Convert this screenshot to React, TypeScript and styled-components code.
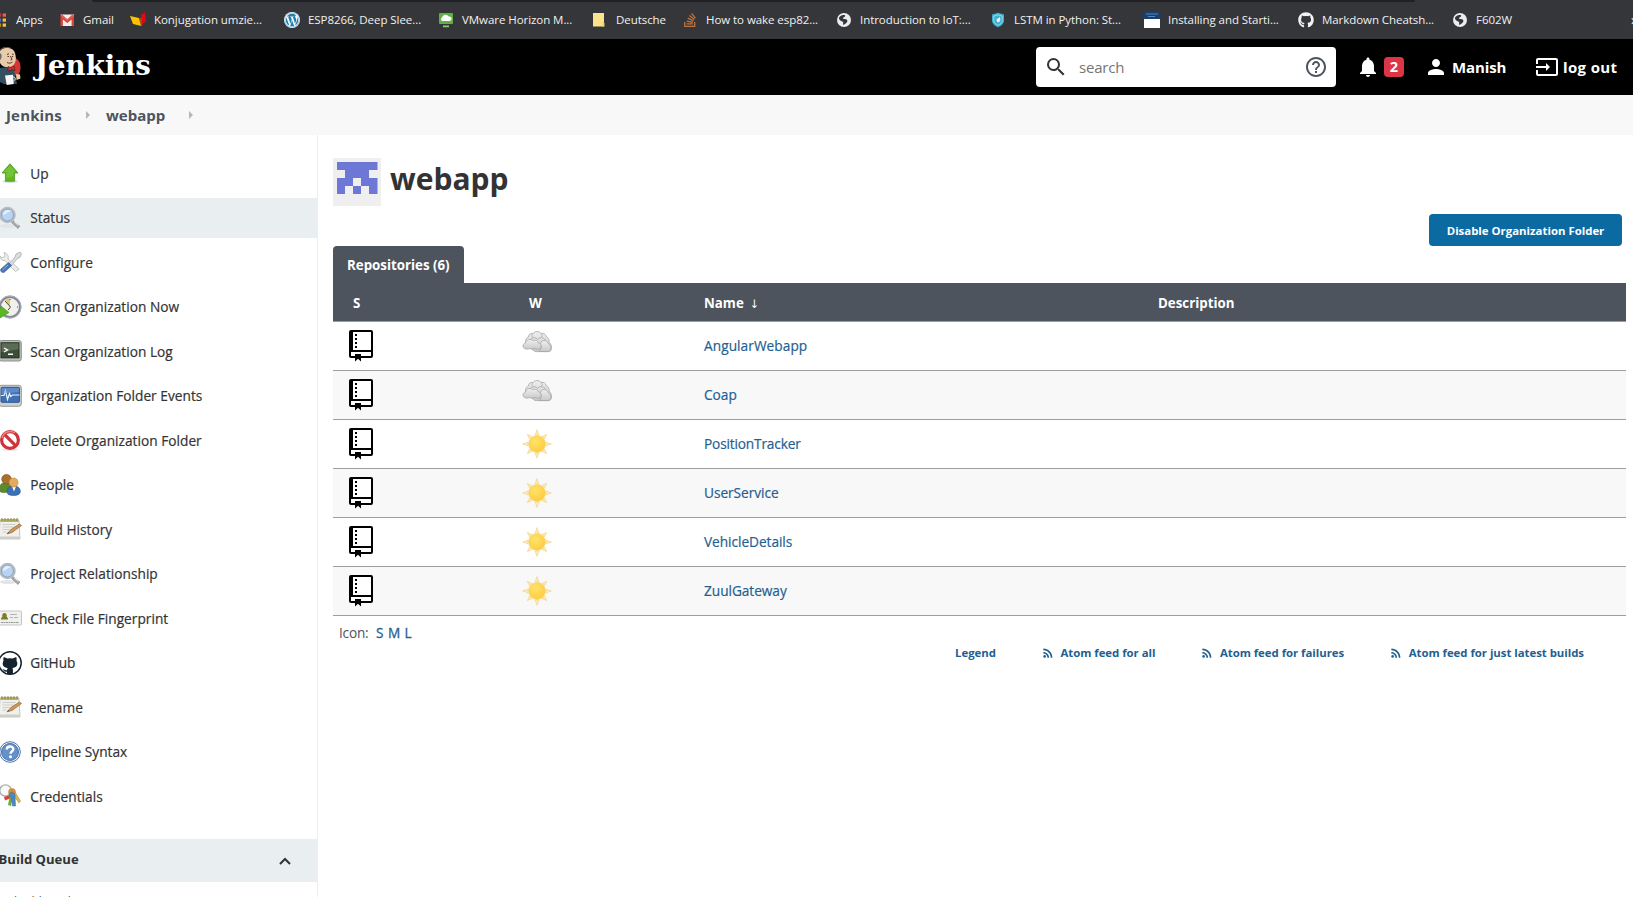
import React from 'react';
import styled, { createGlobalStyle, css } from 'styled-components';
import { FaWordpress, FaStackOverflow, FaGithub } from 'react-icons/fa';
import { MdSearch, MdHelpOutline, MdNotifications, MdPerson, MdInput, MdRssFeed } from 'react-icons/md';

const Global = createGlobalStyle`
  * { box-sizing: border-box; }
  body {
    margin: 0;
    background: #fff;
    color: #333;
    font-family: 'Open Sans', 'Noto Sans', sans-serif;
    overflow: hidden;
  }
  a { color: #1f5f92; text-decoration: none; }
`;

const Page = styled.div`
  display: flex;
  flex-direction: column;
  height: 897px;
  overflow: hidden;
`;

/* ---------- browser bookmarks ---------- */

const TabStrip = styled.div`
  flex: none;
  height: 2px;
  background: #35363a;
  padding: 0 218px 0 92px;
`;
const TabStripFill = styled.div`
  height: 2px;
  background: #202124;
  border-radius: 0 0 4px 4px;
`;
const BookmarkBar = styled.nav`
  flex: none;
  display: flex;
  align-items: center;
  height: 37px;
  padding-bottom: 2px;
  background: #35363a;
  overflow: hidden;
`;
const Bookmark = styled.a<{ $width: number; $offset?: number }>`
  flex: none;
  display: flex;
  align-items: center;
  gap: 8px;
  width: ${(p) => p.$width}px;
  margin-left: ${(p) => p.$offset ?? 0}px;
  font-size: 11.5px;
  letter-spacing: -0.06px;
  white-space: nowrap;
  && { color: #f0f1f1; }
  svg { flex: none; }
`;
const More = styled.span`
  margin-left: auto;
  margin-right: -5px;
  color: #eceded;
  font-size: 14px;
`;

/* ---------- header ---------- */

const Header = styled.header`
  flex: none;
  display: flex;
  align-items: center;
  height: 56px;
  padding-right: 16px;
  background: #000;
  color: #fff;
`;
const Brand = styled.a`
  display: flex;
  align-items: center;
  gap: 13px;
  margin-right: auto;
  svg { display: block; }
`;
const BrandName = styled.span`
  color: #fff;
  font: 700 27.6px/36px 'DejaVu Serif', serif;
  margin-top: -2px;
`;
const SearchBox = styled.div`
  display: flex;
  align-items: center;
  width: 300px;
  height: 40px;
  padding: 0 8px;
  border-radius: 4px;
  background: #fff;
  color: #333;
  svg { display: block; }
`;
const SearchHint = styled.span`
  flex: 1;
  margin: -1px 0 0 11px;
  color: #757575;
  font-size: 15px;
  letter-spacing: -0.2px;
`;
const Alerts = styled.div`
  display: flex;
  align-items: center;
  gap: 4px;
  margin-left: 20px;
`;
const Badge = styled.span`
  width: 20px;
  height: 20px;
  border-radius: 4px;
  background: #dc3545;
  font-size: 14.5px;
  font-weight: 700;
  line-height: 20px;
  text-align: center;
`;
const HeaderLink = styled.span<{ $left: number; $gap: number; $track: number; $width: number }>`
  display: flex;
  align-items: center;
  gap: ${(p) => p.$gap}px;
  width: ${(p) => p.$width}px;
  margin-left: ${(p) => p.$left}px;
  font-size: 15px;
  font-weight: 700;
  letter-spacing: ${(p) => p.$track}px;
  white-space: nowrap;
  svg { flex: none; }
`;

/* ---------- breadcrumbs ---------- */

const Breadcrumbs = styled.div`
  flex: none;
  display: flex;
  align-items: center;
  height: 40px;
  padding-left: 6px;
  background: #f8f8f8;
  color: #4d545d;
  font-size: 15px;
  font-weight: 700;
`;
const Crumb = styled.span<{ $width: number; $track?: number }>`
  width: ${(p) => p.$width}px;
  letter-spacing: ${(p) => p.$track ?? 0}px;
`;
const CrumbArrow = styled.i`
  width: 0;
  border: 4px solid transparent;
  border-right: 0;
  border-left-color: #b4b7ba;
  margin-right: 16px;
`;

/* ---------- side panel ---------- */

const Body = styled.div`
  flex: 1;
  min-height: 0;
  display: flex;
`;
const SidePanel = styled.aside`
  flex: none;
  display: flex;
  flex-direction: column;
  width: 318px;
  border-right: 1px solid #eaeff2;
  padding-top: 18.5px;
  overflow: hidden;
`;
const mediumText = css`
  font-size: 13.7px;
  -webkit-text-stroke: 0.2px currentColor;
`;
const Task = styled.a<{ $active?: boolean }>`
  flex: none;
  display: flex;
  align-items: center;
  height: 40px;
  margin-bottom: 4.5px;
  padding-bottom: 1px;
  ${mediumText}
  letter-spacing: 0.02px;
  background: ${(p) => (p.$active ? '#e9eef1' : 'transparent')};
  && { color: #333; }
  svg { flex: none; width: 24px; height: 24px; margin: 0 8.25px 0 -2px; }
`;
const QueueHeader = styled.div`
  flex: none;
  display: flex;
  align-items: center;
  justify-content: space-between;
  height: 43px;
  margin-top: 18px;
  padding: 0 26px 3px 0;
  background: #e9eef1;
  font-size: 13.1px;
  font-weight: 700;
  span { margin-left: -1.5px; }
  svg { margin-top: 4px; }
`;
const QueueText = styled.div`
  margin: 9px 0 0 -5px;
  font-size: 11.8px;
  line-height: 20px;
  color: #4d545d;
`;

/* ---------- main panel ---------- */

const Main = styled.main`
  flex: 1;
  min-width: 0;
  padding: 23px 7px 0 15px;
`;
const TitleRow = styled.div`
  display: flex;
  align-items: center;
  gap: 9px;
  height: 48px;
`;
const Title = styled.h1`
  margin: -6px 0 0;
  font-size: 30px;
  line-height: 40px;
  font-weight: 700;
`;
const Actions = styled.div`
  display: flex;
  justify-content: flex-end;
  margin: 8px 4px 0 0;
`;
const PrimaryButton = styled.button`
  width: 193px;
  height: 32px;
  padding: 0;
  border: 0;
  border-radius: 4px;
  background: #0b6aa2;
  color: #fff;
  font: 700 11.4px 'Open Sans', sans-serif;
`;
const Tab = styled.div`
  width: 131px;
  height: 37px;
  border-radius: 4px 4px 0 0;
  background: #4d545d;
  color: #fff;
  padding-left: 14px;
  font-size: 13.3px;
  font-weight: 700;
  line-height: 39px;
`;
const Row = styled.div<{ $odd?: boolean }>`
  display: grid;
  grid-template-columns: 176px 175px 454px 1fr;
  align-items: center;
  height: 49px;
  border-bottom: 1px solid #999fa0;
  background: ${(p) => (p.$odd ? '#f8f8f8' : '#fff')};
  ${mediumText}
`;
const HeadRow = styled(Row)`
  height: 39px;
  padding-top: 2px;
  background: #4d545d;
  color: #fff;
  font-size: 13.3px;
  font-weight: 700;
  -webkit-text-stroke: 0;
`;
const Cell = styled.div<{ $pad?: number; $lift?: number; $track?: number }>`
  padding-left: ${(p) => p.$pad ?? 20}px;
  padding-bottom: ${(p) => p.$lift ?? 0}px;
  letter-spacing: ${(p) => p.$track ?? 0}px;
  svg { display: block; }
`;
const SortArrow = styled.span`
  margin-left: 6px;
  font: 400 11.5px/12px 'DejaVu Sans', sans-serif;
`;
const IconSizes = styled.div`
  display: flex;
  height: 18px;
  margin-top: 8px;
  padding-left: 6px;
  font-size: 13.6px;
  line-height: 18px;
  gap: 4.5px;
  color: #4d545d;
  span { margin-right: 3px; letter-spacing: -0.2px; }
  a { -webkit-text-stroke: 0.3px currentColor; }
`;
const Feeds = styled.div`
  display: flex;
  justify-content: flex-end;
  gap: 46px;
  height: 18px;
  margin-top: 2px;
  padding-right: 42px;
  font-size: 11.4px;
  font-weight: 700;
  letter-spacing: -0.03px;
  line-height: 18px;
`;
const Feed = styled.a`
  display: flex;
  align-items: center;
  gap: 6.5px;
  svg { margin: 0 -1px 0 -1px; }
`;

/* ---------- icons ---------- */

const appColors = [
  ['#f44', '#f44', '#ef5b50'],
  ['#4a8', '#59f', '#f5b932'],
  ['#4a8', '#fb0', '#f5c344'],
];
const AppsIcon = () => (
  <svg width="16" height="16" viewBox="0 0 16 16">
    {appColors.map((row, r) =>
      row.map((fill, c) => <rect key={`${r}${c}`} x={c * 5.3} y={1.5 + r * 5} width="3.4" height="3.2" fill={fill} />),
    )}
  </svg>
);
const GmailIcon = () => (
  <svg width="16" height="16" viewBox="-1 0 16 16">
    <path d="M1 2.500h13V14H1z" fill="#f2eeee" />
    <path d="M.5 14V3l6.800 5.600L14 3v11h-2.400V7.400L7.300 11 2.900 7.400V14z" fill="#db4437" />
    <path d="M0 2.600h2.200L7.300 7.300l5-4.700h2.400L7.300 9z" fill="#e2574c" />
  </svg>
);
const KonjIcon = () => (
  <svg width="16" height="16" viewBox="0 0 16 16">
    <path d="M11 3l4-3 1 9-4 4z" fill="#e30613" />
    <path d="M0 4l9 2 2.500 8L3 12z" fill="#fdc300" />
    <path d="M9 6l3 0 0 6-1 2z" fill="#a04a12" />
  </svg>
);
const WordpressIcon = () => (
  <svg width="16" height="16" viewBox="0 0 16 16">
    <circle cx="8" cy="8" r="8" fill="#f4f8fa" />
    <FaWordpress x="0.500" y="0.500" size={15} color="#217eb0" />
  </svg>
);
const HorizonIcon = () => (
  <svg width="16" height="16" viewBox="0 0 16 16">
    <rect x="1" y="1" width="14" height="11" rx="1" fill="#60b145" />
    <path d="M4 9a2 2 0 010-3.400 3.500 3.500 0 016.600-1A2.300 2.300 0 0112 9z" fill="#fff" />
    <path d="M5 13.500h6v1.700H5z" fill="#8fcf6c" />
  </svg>
);
const FolderIcon = () => (
  <svg width="16" height="16" viewBox="0 0 16 16">
    <path d="M1 1h11v13.500H1z" fill="#fce28a" />
    <path d="M10.500 10l2 1v3.500h-2z" fill="#f5cf5c" />
  </svg>
);
const ShieldIcon = () => (
  <svg width="16" height="16" viewBox="0 0 16 16">
    <path d="M8 .8l6 1.800v6c0 3.500-3 5.600-6 6.600-3-1-6-3.100-6-6.600v-6z" fill="#3fb0d0" />
    <path d="M8 2.800l4.200 1.300v4.500c0 2.300-2 3.800-4.200 4.600-2.200-.8-4.200-2.300-4.200-4.600V4.100z" fill="none" stroke="#bfe6f0" strokeWidth=".7" />
    <path d="M10 5L6.500 7.500l.6 2.800h2L10.300 8z" fill="#e8f7fb" />
  </svg>
);
const PageIcon = () => (
  <svg width="16" height="16" viewBox="0 0 16 16">
    <path d="M0 0h16v7H0z" fill="#173f6f" />
    <path d="M2 2h12M4 4.500h7" stroke="#5f86b5" />
    <path d="M0 7h16v9H0z" fill="#fff" />
  </svg>
);
const GlobeIcon = () => (
  <svg width="16" height="16" viewBox="0 0 16 16">
    <circle cx="8" cy="8" r="7" fill="#ececec" />
    <path d="M3 5.500c2-2.500 4-2.500 5.500-2.500 1.500.500.500 1.700-.500 2.200-1.500.400-1.300 1.500 0 1.900 1.500 0 3 .400 3.400 1.600.200 1.800-2 3-3.800 4.300-.800-.800-.300-2.300-.500-3.100C5 8.900 3 8.500 3 5.500z" fill="#35363a" />
  </svg>
);

const Mascot = () => (
  <svg width="22" height="40" viewBox="0 0 22 40">
    <path d="M10 11c7-2 11 4 10.500 10-.3 4-1.500 7-3.500 8L6 27z" fill="#d33833" />
    <path d="M0 21l8-1 6 3 3 14H4l-4-2z" fill="#335061" />
    <path d="M0 4C4-1 13 0 15 6c1.500 5 1 9-1.500 12-3 3-9 3-12 0L0 16z" fill="#e8cbaa" />
    <path d="M0 3C3 0 8-.3 11 1.500" stroke="#81584d" fill="none" />
    <path d="M0 6c2 1 2 4 1 6l-1 1z" fill="#6d6b6d" />
    <path d="M7 7.500l2-.8M12 7l1.700.4M7.500 9.500h1.500M12 9.500h1.200M10.500 9l1.500 3.500-1.500.5M7 15.500c2 1 4 .8 5.500-.5" stroke="#49261c" strokeWidth=".9" fill="none" />
    <path d="M8 19.500l3 1.500 3-2 1 4.500-3-1-4 1.700z" fill="#d33833" stroke="#3a1518" strokeWidth=".6" />
    <path d="M16 27l4 .5.500 4-4 1.500z" fill="#e8cbaa" />
    <path d="M5 28.500l8-.8.700 9.300-7 1z" fill="#f7f7f7" />
    <path d="M13 30c3 0 3 3 .3 4" stroke="#ddd" fill="none" />
  </svg>
);

const Svg = ({ children }: { children: React.ReactNode }) => <svg viewBox="0 0 24 24">{children}</svg>;

const UpIcon = () => (
  <Svg>
    <ellipse cx="12" cy="20.500" rx="8" ry="1.500" fill="#ddd" />
    <path d="M12 2.800l8 9.200h-3.400v8.200H7.400V12H4z" fill="#5fb820" stroke="#4b9820" strokeWidth=".8" />
    <path d="M12 4.300l5.500 6.800h-2v4L8.500 17v-6H6z" fill="#84cc48" opacity=".6" />
  </Svg>
);
const LensIcon = () => (
  <Svg>
    <ellipse cx="10" cy="20" rx="8" ry="2" fill="#e2e4e5" />
    <path d="M15 14.500l6.800 5.500-1.800 2.400-6.500-6z" fill="#aaa" stroke="#888" strokeWidth=".7" />
    <path d="M16.500 15.500l4 3.500" stroke="#e8e8e8" strokeWidth="1.200" />
    <circle cx="9.500" cy="9" r="7.300" fill="#c3d8f0" stroke="#b9bdc0" strokeWidth="2" />
    <circle cx="9.500" cy="9" r="6" fill="#b9d3f2" stroke="#7792b4" strokeWidth=".8" />
    <path d="M5 9c0-3 2-5 5-5 2 0 3.500 1 3.500 1C9 6 7 9 5 9z" fill="#e5f0fc" />
  </Svg>
);
const ToolsIcon = () => (
  <Svg>
    <path d="M6 2.500l1 4-3 1.500-2-2c0 3 2 5 5 4.500l10.500 11 3.500-2.500L10 9c1-3-1-6-4-6.500z" fill="#eceeec" stroke="#b5b8b4" strokeWidth=".8" />
    <path d="M22 2l-4 2-1 3-6 7 2 2 6.500-7.500 2.500-1 1.500-4z" fill="#dadddc" stroke="#9ea5a8" strokeWidth=".7" />
    <path d="M10.500 12.500l3 3-7 6.500c-2 1.500-5-1-3.500-3z" fill="#4877b8" stroke="#2f5b97" strokeWidth=".7" />
    <path d="M10 15l-5.500 5" stroke="#8db2e3" />
  </Svg>
);
const ClockIcon = () => (
  <Svg>
    <circle cx="12" cy="12" r="10.200" fill="#f1f1ec" stroke="#85859a" strokeWidth="2.400" />
    <circle cx="12" cy="12" r="11" fill="none" stroke="#b7b7c8" strokeWidth=".8" />
    <path d="M12 12L7 5a8.500 8.500 0 015-1.500z" fill="#ddcb65" />
    <path d="M7 6l5.500 6L10 15M12 4v1M20 12h-1" stroke="#444" fill="none" />
    <path d="M1 14l2-1v-2l8 6.500L2 23z" fill="#5bb824" stroke="#439b12" strokeWidth=".6" />
  </Svg>
);
const TerminalIcon = () => (
  <Svg>
    <rect x="1" y="1.500" width="22.300" height="20.500" rx="2.500" fill="#bbbdb8" stroke="#8f928d" />
    <rect x="3" y="3.800" width="18" height="15" fill="#3b4f38" stroke="#20291e" />
    <path d="M3.500 4.300h17v6l-17 3z" fill="#70806b" opacity=".6" />
    <path d="M6 9l3.500 2L6 13M10 15.200h5" stroke="#fff" strokeWidth="1.400" fill="none" />
  </Svg>
);
const MonitorIcon = () => (
  <Svg>
    <rect x="1" y="1.300" width="22.300" height="21" rx="2.500" fill="#cdd0cb" stroke="#969a94" />
    <rect x="3" y="3.300" width="18.500" height="15" rx="1" fill="#3f70b4" stroke="#2f5894" />
    <path d="M3 11.500h3l1.500-5 2 9 2-6 1 3 2-1.500h7" stroke="#e9f2ff" strokeWidth="1.200" fill="none" />
    <path d="M3.500 4h17.500v4l-17.500 2z" fill="#7ca3d8" opacity=".5" />
  </Svg>
);
const ForbidIcon = () => (
  <Svg>
    <ellipse cx="12" cy="21.500" rx="8" ry="1.500" fill="#e3e3e3" />
    <circle cx="12" cy="12" r="8.400" fill="#fff" stroke="#cf3339" strokeWidth="3.200" />
    <path d="M6.200 6.200l11.600 11.600" stroke="#cf3339" strokeWidth="3.200" />
    <path d="M4 10a8.400 8.400 0 0113-5" stroke="#ef8585" fill="none" strokeWidth="1.500" />
  </Svg>
);
const PeopleIcon = () => (
  <Svg>
    <path d="M1 16c0-4 3-6.500 7-6.500s6 2 6 5-5 5-8 5-5-1-5-3.500z" fill="#5d8a2b" stroke="#426a18" strokeWidth=".6" />
    <circle cx="8.500" cy="6.200" r="4.800" fill="#a9702d" stroke="#815218" strokeWidth=".6" />
    <path d="M9 19c0-4.500 2.500-6 7-6s6.300 2.500 6.300 5.500-3 4-6.800 4S9 21.500 9 19z" fill="#3c6fb4" stroke="#2a558f" strokeWidth=".6" />
    <path d="M14 13.500h4l-2 5z" fill="#fff" />
    <circle cx="15.600" cy="9.500" r="4.500" fill="#e5ab5c" stroke="#c78429" strokeWidth=".6" />
  </Svg>
);
const NotepadIcon = () => (
  <Svg>
    <path d="M2 3.500h19l1 18.500H1z" fill="#f0f0ec" stroke="#b9bab4" strokeWidth=".8" />
    <path d="M1 19.500h21V22H1z" fill="#cfcfca" />
    <path d="M2.500 2h18v3h-18z" fill="#b5b06a" />
    <path d="M4 1v3M7 1v3M10 1v3M13 1v3M16 1v3M19 1v3" stroke="#8f8941" />
    <path d="M4.500 7.500h13M4.500 10h11M4.500 12.500h8M4.500 15h4" stroke="#c3c5c0" strokeWidth=".8" />
    <path d="M23.500 8.500l-2-1.500L13.500 12 9 16.800l5-1.300z" fill="#cf9552" stroke="#94693a" strokeWidth=".7" />
    <path d="M9 16.800l1.200-1.500 1.200.8z" fill="#444" />
  </Svg>
);
const CardIcon = () => (
  <Svg>
    <rect x=".5" y="5" width="23" height="14" rx=".8" fill="#f0f0ec" stroke="#c5c6c1" />
    <path d="M3 13.500c0-2 1-2.500 1.500-3a2.300 2.300 0 114 0c.5.500 1.500 1 1.500 3z" fill="#7d7d27" />
    <path d="M12 8.500h7M12 11.500h3M16 11.500h4" stroke="#b2b4ad" />
    <path d="M3 16.500h18" stroke="#999b95" strokeWidth="1.200" strokeDasharray="2 .5" />
  </Svg>
);
const OctocatIcon = () => (
  <Svg>
    <circle cx="12" cy="12" r="11.200" fill="#fff" stroke="#14232f" strokeWidth="1.500" />
    <path d="M5.800 6l3.600 1.500a13 13 0 015.200 0L18.200 6c.8 2 .4 3 .2 3.600 2.400 4.400 0 7.200-4 7.400.6.900.6 2 .6 6-2 .5-4 .5-6 0v-2.300c-3 .6-3.500-2-4.800-2.700 2-.2 2.400 1.800 4.800 1.200.1-1 .3-1.700.7-2.200-4-.2-6.400-3-4.100-7.400-.2-.6-.6-1.600.2-3.600z" fill="#14232f" />
  </Svg>
);
const QuestionIcon = () => (
  <Svg>
    <circle cx="12" cy="12" r="10.300" fill="#f4f7fb" stroke="#4d76ae" strokeWidth="1" />
    <circle cx="12" cy="12" r="8.500" fill="#6690c8" stroke="#4b73ab" />
    <path d="M8.800 9.500c0-4 6.500-3.800 6.500-.5 0 2.300-2.700 2.300-2.700 4.700" stroke="#fff" strokeWidth="2.400" fill="none" />
    <circle cx="12.500" cy="16.800" r="1.500" fill="#fff" />
  </Svg>
);
const KeysIcon = () => (
  <Svg>
    <circle cx="7.500" cy="6.500" r="5.700" fill="#fafafa" stroke="#a9abad" strokeWidth="1.300" />
    <path d="M6 13l6-2 2 1-2 2.500-5 2z" fill="#d4443e" />
    <path d="M17 8l5.500 9-1.500 2-5-7z" fill="#d9b84c" stroke="#a98b2c" strokeWidth=".5" />
    <path d="M12 11l3 1-2 10-3-1z" fill="#68ad36" />
    <circle cx="14" cy="8" r="3.800" fill="#d68f32" />
    <path d="M11 10c2-3 5-2 6 1l.5 11h-3l-1-8z" fill="#4c87c6" stroke="#356ba6" strokeWidth=".5" />
  </Svg>
);

const BookIcon = () => (
  <svg width="24" height="32" viewBox="0 0 24 32">
    <rect x="1" y="1" width="22" height="26" rx="1" fill="#fff" stroke="#000" strokeWidth="2" />
    <path d="M1 1h3v20H1zM1 20h22v2H1z" fill="#000" />
    <path d="M7 4v15" stroke="#000" strokeWidth="2" strokeDasharray="2 2" />
    <path d="M6 24h6v7.500l-3-2.700-3 2.700z" fill="#000" />
  </svg>
);
const CloudIcon = () => (
  <svg width="30" height="22" viewBox="0 0 30 22">
    <defs>
      <linearGradient id="cloud" x1="0" y1="0" x2="0" y2="1">
        <stop offset="0" stopColor="#efefef" />
        <stop offset="1" stopColor="#c9c9c9" />
      </linearGradient>
    </defs>
    <g fill="url(#cloud)" stroke="#a0a0a0" strokeWidth=".7">
      <path d="M5 14C3 11 3 7 6.500 6 6.500 3 9 1.800 11 2.600 12.500 0 17.500-.2 19 2.500c2.500-.8 5 .5 5 3 2.500 1 3.500 3.500 3 5.500 2.500 2 3 5.500 2 8-.6 1.200-1.500 1.600-3 1.600H13z" />
      <path d="M11 2.600c-1.500 1-1.500 3 0 4M19 2.500c1.500 1 1.500 3 0 4M8 9c2-3 6-3 7.500-.5C17 6 22 6 23.500 9" fill="none" />
      <path d="M17 20.500c2-1.500 3-4 1.500-6.500-.8-2 1-4.500 3.500-4.500s4 1.500 4.500 3.500c2.500 1 3 4 2 6-.6 1.200-1.500 1.600-3 1.600z" />
      <path d="M2.500 17.500C.300 16.500.500 12.500 3.500 12 4 8.500 8.500 7.500 10.500 9.500c3-1 5.500 0 6 2.500 3 .8 3.500 4 1.500 5.500-1.500 1.300-3.500 1-5 0-2 1-4 .8-5 0-2 .8-4 .8-5.500 0z" />
    </g>
  </svg>
);
const SunIcon = () => (
  <svg width="30" height="30" viewBox="-15 -15 30 30">
    <defs>
      <radialGradient id="sun" cx=".4" cy=".35" r=".7">
        <stop offset="0" stopColor="#ffe36b" />
        <stop offset="1" stopColor="#fdcb3c" />
      </radialGradient>
    </defs>
    {[0, 45, 90, 135, 180, 225, 270, 315].map((a) => (
      <path
        key={a}
        d={a % 90 ? 'M-1.700-9L0-13.500 1.700-9z' : 'M-1.800-9L0-14.300 1.800-9z'}
        transform={`rotate(${a})`}
        fill="#fdeebb"
        stroke="#f1cd7a"
        strokeWidth=".6"
      />
    ))}
    <circle r="8.400" fill="url(#sun)" stroke="#f9d477" strokeWidth=".8" />
  </svg>
);
const Identicon = () => (
  <svg width="48" height="48" viewBox="0 0 48 48">
    <rect width="48" height="48" fill="#efefef" />
    <path d="M4 4h40.500v8H36v8h8.500v16H36v-8h-8v8h-8v-8h-8v8H4V20h8v-8H4z" fill="#6c77d6" />
    <path d="M20 20h8v8h-8z" fill="#efefef" />
  </svg>
);

/* ---------- data ---------- */

const bookmarks: { label: string; icon: React.ReactNode; width: number; offset?: number }[] = [
  { label: 'Apps', icon: <AppsIcon />, width: 67, offset: -8 },
  { label: 'Gmail', icon: <GmailIcon />, width: 71 },
  { label: 'Konjugation umzie...', icon: <KonjIcon />, width: 154 },
  { label: 'ESP8266, Deep Slee...', icon: <WordpressIcon />, width: 154 },
  { label: 'VMware Horizon M...', icon: <HorizonIcon />, width: 154 },
  { label: 'Deutsche', icon: <FolderIcon />, width: 90 },
  { label: 'How to wake esp82...', icon: <FaStackOverflow size={16} color="#bd7640" />, width: 154 },
  { label: 'Introduction to IoT:...', icon: <GlobeIcon />, width: 154 },
  { label: 'LSTM in Python: St...', icon: <ShieldIcon />, width: 154 },
  { label: 'Installing and Starti...', icon: <PageIcon />, width: 154 },
  { label: 'Markdown Cheatsh...', icon: <FaGithub size={16} color="#f2f2f2" />, width: 154 },
  { label: 'F602W', icon: <GlobeIcon />, width: 70 },
];

const tasks: [string, React.ReactNode][] = [
  ['Up', <UpIcon />],
  ['Status', <LensIcon />],
  ['Configure', <ToolsIcon />],
  ['Scan Organization Now', <ClockIcon />],
  ['Scan Organization Log', <TerminalIcon />],
  ['Organization Folder Events', <MonitorIcon />],
  ['Delete Organization Folder', <ForbidIcon />],
  ['People', <PeopleIcon />],
  ['Build History', <NotepadIcon />],
  ['Project Relationship', <LensIcon />],
  ['Check File Fingerprint', <CardIcon />],
  ['GitHub', <OctocatIcon />],
  ['Rename', <NotepadIcon />],
  ['Pipeline Syntax', <QuestionIcon />],
  ['Credentials', <KeysIcon />],
];

const repos = [
  { name: 'AngularWebapp', sunny: false, track: 0.05 },
  { name: 'Coap', sunny: false, track: 0 },
  { name: 'PositionTracker', sunny: true, track: -0.17 },
  { name: 'UserService', sunny: true, track: -0.05 },
  { name: 'VehicleDetails', sunny: true, track: -0.05 },
  { name: 'ZuulGateway', sunny: true, track: -0.05 },
];

export default function App() {
  return (
    <Page>
      <Global />
      <TabStrip><TabStripFill /></TabStrip>
      <BookmarkBar>
        {bookmarks.map((b) => (
          <Bookmark key={b.label} $width={b.width} $offset={b.offset}>
            {b.icon}
            {b.label}
          </Bookmark>
        ))}
        <More>»</More>
      </BookmarkBar>

      <Header>
        <Brand>
          <Mascot />
          <BrandName>Jenkins</BrandName>
        </Brand>
        <SearchBox>
          <MdSearch size={24} />
          <SearchHint>search</SearchHint>
          <MdHelpOutline size={24} color="#4d545d" />
        </SearchBox>
        <Alerts>
          <MdNotifications size={24} />
          <Badge>2</Badge>
        </Alerts>
        <HeaderLink $left={20} $gap={4} $track={-0.1} $width={84}>
          <MdPerson size={24} />
          Manish
        </HeaderLink>
        <HeaderLink $left={27} $gap={4} $track={0.35} $width={82}>
          <MdInput size={24} />
          log out
        </HeaderLink>
      </Header>

      <Breadcrumbs>
        <Crumb $width={80} $track={0.15}>Jenkins</Crumb>
        <CrumbArrow />
        <Crumb $width={83}>webapp</Crumb>
        <CrumbArrow />
      </Breadcrumbs>

      <Body>
        <SidePanel>
          {tasks.map(([label, icon]) => (
            <Task key={label} $active={label === 'Status'}>
              {icon}
              {label}
            </Task>
          ))}
          <QueueHeader>
            <span>Build Queue</span>
            <svg width="12" height="8" viewBox="0 0 12 8">
              <path d="M1 7l5-5 5 5" fill="none" stroke="#333" strokeWidth="2" />
            </svg>
          </QueueHeader>
          <QueueText>No builds in the queue.</QueueText>
        </SidePanel>

        <Main>
          <TitleRow>
            <Identicon />
            <Title>webapp</Title>
          </TitleRow>
          <Actions>
            <PrimaryButton>Disable Organization Folder</PrimaryButton>
          </Actions>
          <Tab>Repositories (6)</Tab>
          <HeadRow>
            <Cell>S</Cell>
            <Cell>W</Cell>
            <Cell>Name<SortArrow>↓</SortArrow></Cell>
            <Cell>Description</Cell>
          </HeadRow>
          {repos.map((r, i) => (
            <Row key={r.name} $odd={i % 2 === 1}>
              <Cell $pad={16}><BookIcon /></Cell>
              <Cell $pad={13} $lift={r.sunny ? 1 : 8}>{r.sunny ? <SunIcon /> : <CloudIcon />}</Cell>
              <Cell $track={r.track} $lift={2}><a>{r.name}</a></Cell>
              <Cell />
            </Row>
          ))}
          <IconSizes>
            <span>Icon:</span>
            <a>S</a>
            <a>M</a>
            <a>L</a>
          </IconSizes>
          <Feeds>
            <Feed>Legend</Feed>
            {['all', 'failures', 'just latest builds'].map((kind) => (
              <Feed key={kind}>
                <MdRssFeed size={14} />
                Atom feed for {kind}
              </Feed>
            ))}
          </Feeds>
        </Main>
      </Body>
    </Page>
  );
}
